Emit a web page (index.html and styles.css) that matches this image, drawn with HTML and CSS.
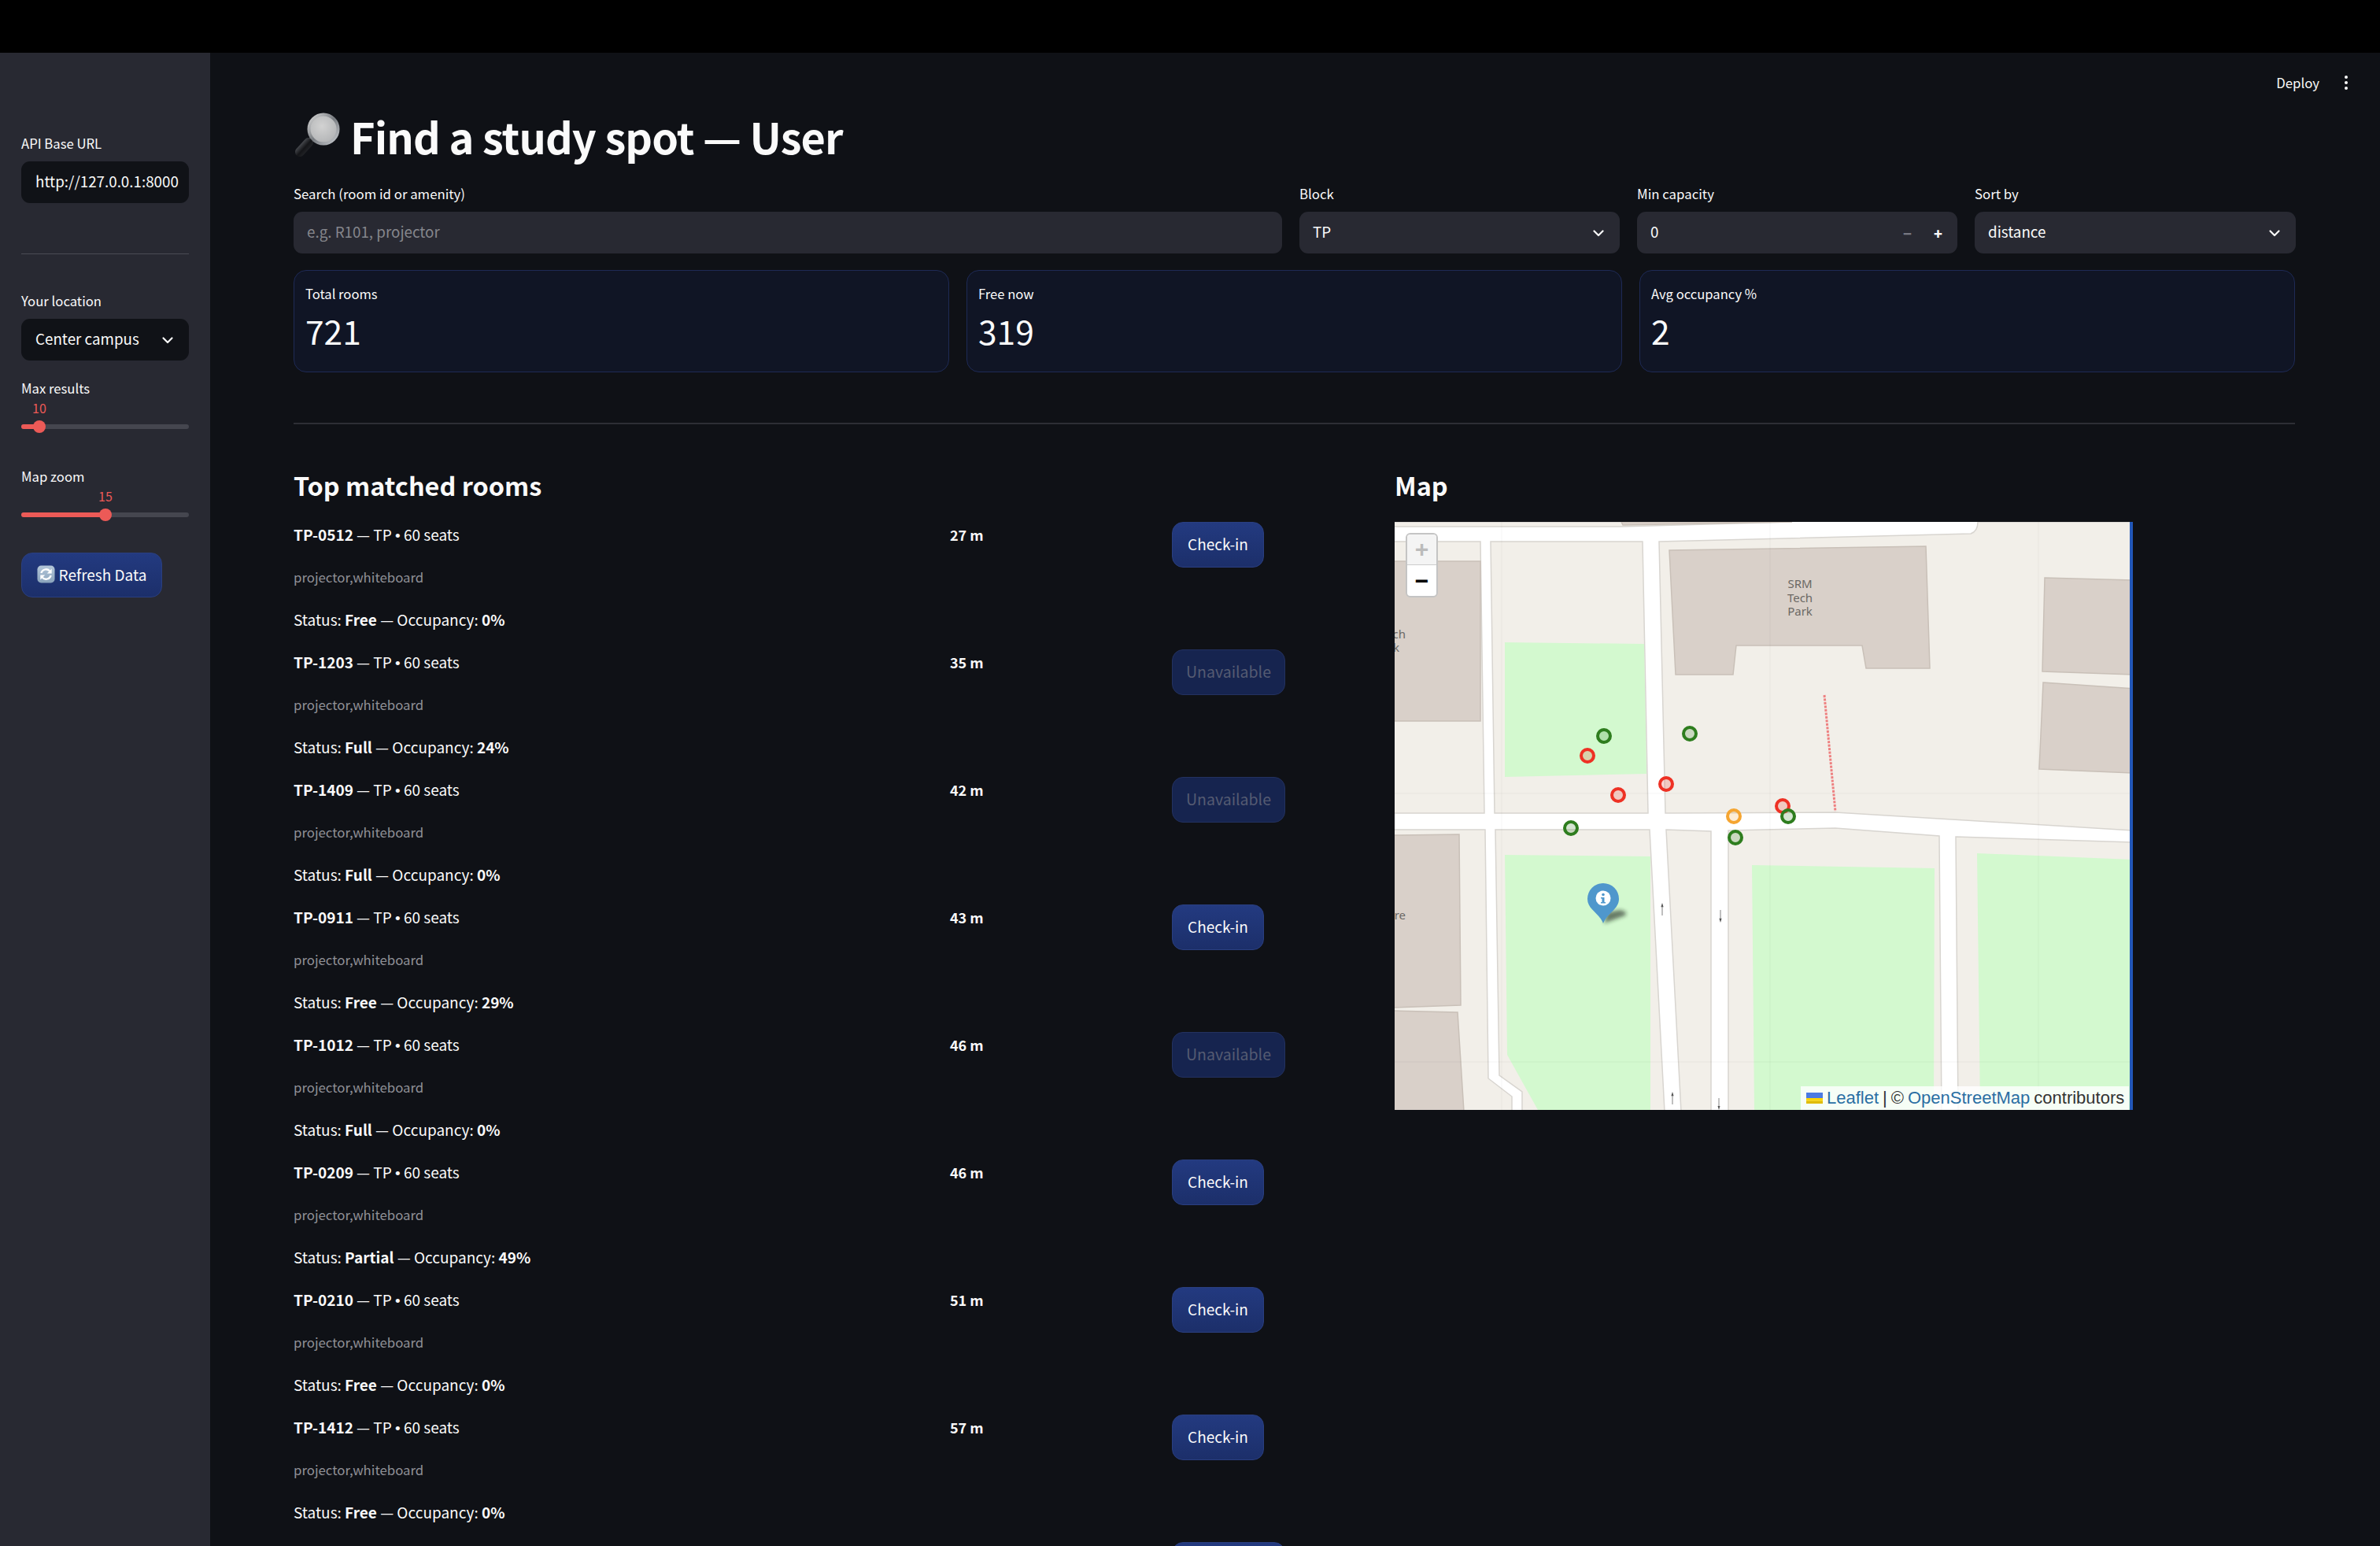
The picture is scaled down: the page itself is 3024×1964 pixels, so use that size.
FILE: index.html
```html
<!DOCTYPE html>
<html lang="en">
<head>
<meta charset="utf-8">
<title>Find a study spot — User</title>
<link rel="stylesheet" href="styles.css">
</head>
<body>
<svg class="defs" width="0" height="0" aria-hidden="true">
  <symbol id="chev" viewBox="0 0 16 10"><path d="M2.5 2.5l5.5 5.5 5.5-5.5" fill="none" stroke="currentColor" stroke-width="2.2" stroke-linecap="round" stroke-linejoin="round"/></symbol>
  <symbol id="arrow-up" viewBox="0 0 8 30"><path d="M4 30V8" stroke="#555" stroke-width="1.4"/><path d="M4 0l3 10H1z" fill="#555"/></symbol>
  <symbol id="arrow-down" viewBox="0 0 8 30"><path d="M4 0v22" stroke="#555" stroke-width="1.4"/><path d="M4 30l3-10H1z" fill="#555"/></symbol>
</svg>
<div class="topbar"></div>
<div class="app">
  <aside class="sidebar">
    <div class="side-field side-api">
      <label class="side-label">API Base URL</label>
      <div class="side-input">http://127.0.0.1:8000</div>
    </div>
    <hr class="side-rule">
    <div class="side-field">
      <label class="side-label">Your location</label>
      <div class="side-input side-select">Center campus <svg class="chev"><use href="#chev"/></svg></div>
    </div>
    <div class="slider slider-first">
      <label class="side-label">Max results</label>
      <div class="slider-value slider-value-10">10</div>
      <div class="track"><div class="fill" style="width:11%"><span class="thumb"></span></div></div>
    </div>
    <div class="slider slider-second">
      <label class="side-label">Map zoom</label>
      <div class="slider-value slider-value-15">15</div>
      <div class="track"><div class="fill" style="width:50%"><span class="thumb"></span></div></div>
    </div>
    <button class="btn refresh">
      <svg class="refresh-icon" viewBox="0 0 24 24">
        <defs><linearGradient id="rg" x1="0" y1="0" x2="0" y2="1"><stop offset="0" stop-color="#b4c7d9"/><stop offset="1" stop-color="#8aa3bc"/></linearGradient></defs>
        <rect x="0.5" y="0.5" width="23" height="23" rx="5" fill="url(#rg)"/>
        <path d="M5.6 10.5A6.6 6.6 0 0 1 16.8 7.6" fill="none" stroke="#fff" stroke-width="2.4"/><path d="M19.5 4.8v6.2h-6.2z" fill="#fff"/>
        <path d="M18.4 13.5A6.6 6.6 0 0 1 7.2 16.4" fill="none" stroke="#fff" stroke-width="2.4"/><path d="M4.5 19.2v-6.2h6.2z" fill="#fff"/>
      </svg>
      Refresh Data
    </button>
  </aside>

  <main class="main">
    <div class="toolbar"><span>Deploy</span><span class="dots"><i></i><i></i><i></i></span></div>

    <h1 class="title">
      <svg class="emoji" viewBox="0 0 60 60">
        <defs>
          <radialGradient id="lens" cx="0.45" cy="0.4" r="0.7"><stop offset="0" stop-color="#d2d2d2"/><stop offset="1" stop-color="#aeb0b2"/></radialGradient>
          <linearGradient id="rim" x1="0" y1="0" x2="1" y2="1"><stop offset="0" stop-color="#d9d9d9"/><stop offset=".5" stop-color="#777b80"/><stop offset="1" stop-color="#c9ccd0"/></linearGradient>
          <linearGradient id="grip" x1="0" y1="0" x2="1" y2="1"><stop offset="0" stop-color="#55585d"/><stop offset=".55" stop-color="#141518"/><stop offset="1" stop-color="#26282c"/></linearGradient>
        </defs>
        <path d="M24 33l-5 6" stroke="#8b8d90" stroke-width="7"/>
        <path d="M19 38L8 50" stroke="url(#grip)" stroke-width="12" stroke-linecap="round"/>
        <circle cx="38" cy="21" r="18.5" fill="url(#lens)" stroke="url(#rim)" stroke-width="4"/>
      </svg>
      Find a study spot — User
    </h1>

    <section class="filters">
      <div class="field">
        <label class="label">Search (room id or amenity)</label>
        <div class="input placeholder">e.g. R101, projector</div>
      </div>
      <div class="field">
        <label class="label">Block</label>
        <div class="input">TP <svg class="chev"><use href="#chev"/></svg></div>
      </div>
      <div class="field">
        <label class="label">Min capacity</label>
        <div class="input">0 <span class="stepper"><b class="minus">−</b><b>+</b></span></div>
      </div>
      <div class="field">
        <label class="label">Sort by</label>
        <div class="input">distance <svg class="chev"><use href="#chev"/></svg></div>
      </div>
    </section>

    <section class="metrics">
      <div class="metric"><div class="metric-label">Total rooms</div><div class="metric-value">721</div></div>
      <div class="metric"><div class="metric-label">Free now</div><div class="metric-value">319</div></div>
      <div class="metric"><div class="metric-label">Avg occupancy %</div><div class="metric-value">2</div></div>
    </section>

    <hr class="rule">

    <section class="columns">
      <div class="rooms">
        <h2 class="heading">Top matched rooms</h2>
        <div class="room">
          <div class="room-text"><p><b>TP-0512</b> — TP <span class="bull">•</span> 60 seats</p><p class="amen">projector,whiteboard</p><p>Status: <b>Free</b> — Occupancy: <b>0%</b></p></div>
          <div class="dist">27 m</div><button class="btn">Check-in</button>
        </div>
        <div class="room">
          <div class="room-text"><p><b>TP-1203</b> — TP <span class="bull">•</span> 60 seats</p><p class="amen">projector,whiteboard</p><p>Status: <b>Full</b> — Occupancy: <b>24%</b></p></div>
          <div class="dist">35 m</div><button class="btn off">Unavailable</button>
        </div>
        <div class="room">
          <div class="room-text"><p><b>TP-1409</b> — TP <span class="bull">•</span> 60 seats</p><p class="amen">projector,whiteboard</p><p>Status: <b>Full</b> — Occupancy: <b>0%</b></p></div>
          <div class="dist">42 m</div><button class="btn off">Unavailable</button>
        </div>
        <div class="room">
          <div class="room-text"><p><b>TP-0911</b> — TP <span class="bull">•</span> 60 seats</p><p class="amen">projector,whiteboard</p><p>Status: <b>Free</b> — Occupancy: <b>29%</b></p></div>
          <div class="dist">43 m</div><button class="btn">Check-in</button>
        </div>
        <div class="room">
          <div class="room-text"><p><b>TP-1012</b> — TP <span class="bull">•</span> 60 seats</p><p class="amen">projector,whiteboard</p><p>Status: <b>Full</b> — Occupancy: <b>0%</b></p></div>
          <div class="dist">46 m</div><button class="btn off">Unavailable</button>
        </div>
        <div class="room">
          <div class="room-text"><p><b>TP-0209</b> — TP <span class="bull">•</span> 60 seats</p><p class="amen">projector,whiteboard</p><p>Status: <b>Partial</b> — Occupancy: <b>49%</b></p></div>
          <div class="dist">46 m</div><button class="btn">Check-in</button>
        </div>
        <div class="room">
          <div class="room-text"><p><b>TP-0210</b> — TP <span class="bull">•</span> 60 seats</p><p class="amen">projector,whiteboard</p><p>Status: <b>Free</b> — Occupancy: <b>0%</b></p></div>
          <div class="dist">51 m</div><button class="btn">Check-in</button>
        </div>
        <div class="room">
          <div class="room-text"><p><b>TP-1412</b> — TP <span class="bull">•</span> 60 seats</p><p class="amen">projector,whiteboard</p><p>Status: <b>Free</b> — Occupancy: <b>0%</b></p></div>
          <div class="dist">57 m</div><button class="btn">Check-in</button>
        </div>
        <div class="room">
          <div class="room-text"></div><div class="dist"></div><button class="btn btn-cut"></button>
        </div>
      </div>

      <div class="map-col">
        <h2 class="heading map-heading">Map</h2>
        <div class="map">
          <svg class="tiles" viewBox="0 0 938 747" width="938" height="747">
            <defs><filter id="soft" x="-40%" y="-40%" width="180%" height="180%"><feGaussianBlur stdDeviation="2.5"/></filter></defs>
            <rect width="938" height="747" fill="#fff"/>
            <g fill="#f2efe9" stroke="#d8d5d0" stroke-width="1.5">
              <path d="M-2 0H505L288 6H-2z"/>
              <path d="M-2 25H109L114 370H-2z"/>
              <path d="M122 25H315L322 370H127z"/>
              <path d="M336 25L732 15Q741 12 741 0H940V392L675 376L560 369L344 370z"/>
              <path d="M-2 391H115L119 707L149 730V749H-2z"/>
              <path d="M128 391H324L343 749H162V724L133 703z"/>
              <path d="M345 391L402 393V749H364z"/>
              <path d="M424 392L560 389L692 399L695 749H424z"/>
              <path d="M713 400L940 407V749H716z"/>
            </g>
            <g fill="#d9d0c9" stroke="#c9c0b8" stroke-width="1.5">
              <path d="M-2 50H109V253H-2z"/>
              <path d="M288 0H505L290 4z"/>
              <path d="M349 36L675 31L680 186H599L594 157H434L430 194H357z"/>
              <path d="M826 71L940 74V194L823 190z"/>
              <path d="M824 204L940 212V319L819 314z"/>
              <path d="M-2 398L82 397L84 614L-2 617z"/>
              <path d="M-2 621L80 623L88 749H-2z"/>
            </g>
            <g fill="#d3f9cf">
              <path d="M140 153L317 155L320 320L140 324z"/>
              <path d="M140 423L325 425V747H182L143 677z"/>
              <path d="M454 436L686 440L685 747H457z"/>
              <path d="M740 421L940 429V747H744z"/>
            </g>
            <g stroke="#000" stroke-opacity=".04" stroke-width="1">
              <path d="M136 0V747M477 0V747M818 0V747M0 345H938M0 686H938"/>
            </g>
            <g class="map-label">
              <text x="515" y="84" text-anchor="middle">SRM</text>
              <text x="515" y="102" text-anchor="middle">Tech</text>
              <text x="515" y="119" text-anchor="middle">Park</text>
              <text x="14" y="148" text-anchor="end">Tech</text>
              <text x="6" y="165" text-anchor="end">Park</text>
              <text x="14" y="505" text-anchor="end">Centre</text>
            </g>
            <use href="#arrow-up" x="336" y="484" width="8" height="16"/>
            <use href="#arrow-down" x="410" y="493" width="8" height="16"/>
            <use href="#arrow-up" x="349" y="724" width="8" height="16"/>
            <use href="#arrow-down" x="408" y="732" width="8" height="15"/>
            <path d="M546 220L560 368" stroke="#ee8080" stroke-width="3" stroke-dasharray="3 1.5"/>
            <g stroke-width="4" fill-opacity=".2">
              <g class="m-green"><circle cx="266" cy="272" r="8"/><circle cx="375" cy="269" r="8"/><circle cx="224" cy="389" r="8"/></g>
              <g class="m-red"><circle cx="245" cy="297" r="8"/><circle cx="345" cy="333" r="8"/><circle cx="284" cy="347" r="8"/><circle cx="493" cy="361" r="8"/></g>
              <g class="m-orange"><circle cx="431" cy="374" r="8"/></g>
              <g class="m-green"><circle cx="500" cy="374" r="8"/><circle cx="433" cy="401" r="8"/></g>
            </g>
            <path d="M266 510L293 500Q297 495 286 493L270 496z" fill="#1e2a1e" fill-opacity=".6" filter="url(#soft)"/>
            <path d="M265 510C259 496 245 492 245 479A20 20 0 0 1 285 479C285 492 271 496 265 510z" fill="#4f97cc"/>
            <circle cx="265" cy="478" r="9.5" fill="#fff"/>
            <circle cx="265" cy="473.5" r="1.8" fill="#4f97cc"/>
            <path d="M262 477H266.5V483H268V484.5H262V483H263.5V478.5H262z" fill="#4f97cc"/>
          </svg>
          <div class="zoom-ctl"><span class="zoom-in">+</span><span class="zoom-out">−</span></div>
          <div class="attr">
            <svg class="flag" viewBox="0 0 21 14"><rect width="21" height="7" fill="#4c7be1"/><rect y="7" width="21" height="3.5" fill="#ffd500"/><rect y="10.5" width="21" height="3.5" fill="#e0bc00"/></svg>
            <span class="link">Leaflet</span> <span class="sep">|</span> © <span class="link">OpenStreetMap</span> contributors
          </div>
          <div class="map-edge"></div>
        </div>
      </div>
    </section>
  </main>
</div>
</body>
</html>
```
FILE: styles.css
```css
* { box-sizing: border-box; }
html, body { margin: 0; height: 1964px; overflow: hidden; background: #000; }
body { font-family: "Noto Sans CJK SC", "Noto Sans", sans-serif; color: #fafafa; }
.defs { position: absolute; }
.topbar { height: 67px; background: #000; }
.app { display: flex; height: 1897px; overflow: hidden; }

/* sidebar */
.sidebar { width: 267px; flex: none; background: #282932; padding: 104px 27px 0; display: flex; flex-direction: column; align-items: stretch; }
.side-label { display: block; font-size: 16.7px; line-height: 22px; color: #fafafa; }
.side-field .side-label { margin-bottom: 12px; }
.side-input { height: 53px; background: #101217; border-radius: 11px; padding: 0 19px 4px 18px; font-size: 18.8px; display: flex; align-items: center; justify-content: space-between; color: #fafafa; white-space: nowrap; }
.side-api .side-input { padding-right: 10px; }
.side-rule { width: 100%; border: 0; border-top: 1px solid #4a4b55; margin: 64px 0 48px; }
.side-select .chev { margin-top: 4px; }
.slider { position: relative; height: 60px; }
.slider-first { margin-top: 24px; }
.slider-second { margin-top: 52px; }
.slider-value { font-size: 16px; line-height: 20px; color: #ec5a57; position: absolute; top: 26px; }
.slider-value-10 { left: 14px; }
.slider-value-15 { left: 98px; }
.track { position: absolute; top: 57px; left: 0; right: 0; height: 6px; border-radius: 3px; background: #45464f; }
.fill { position: relative; height: 6px; background: #ec5a57; border-radius: 3px; }
.thumb { position: absolute; right: -8px; top: -5px; width: 16px; height: 16px; border-radius: 50%; background: #ec5a57; }
.refresh { align-self: flex-start; margin-top: 48px; width: 179px; height: 57px; display: flex; align-items: center; justify-content: center; gap: 5px; font-size: 19px; padding-bottom: 2px; }
.refresh-icon { width: 23px; height: 23px; flex: none; }

/* buttons */
.btn { font-family: inherit; color: #fafafa; font-size: 19px; border: 1px solid #2a3f80; border-radius: 14px; background: linear-gradient(#233a80, #1c2f6a); padding: 0 0 3px; }
.room .btn { width: 117px; height: 58px; margin-top: 11px; }
.room .btn.off { width: 144px; background: #16244f; border-color: #23315f; color: #555b72; font-size: 19.5px; }
.room .btn-cut { width: 144px; }

/* main */
.main { flex: 1; min-width: 0; position: relative; background: #0f1116; padding: 74px 108px 0 106px; }
.toolbar { position: absolute; top: 25px; right: 41px; display: flex; align-items: center; gap: 32px; font-size: 16.8px; line-height: 26px; }
.dots { display: flex; flex-direction: column; gap: 3px; }
.dots i { width: 4px; height: 4px; border-radius: 50%; background: #fafafa; }
.title { margin: 0 0 30px; height: 64px; display: flex; align-items: center; gap: 12px; font-size: 54px; letter-spacing: -.85px; line-height: 64px; font-weight: 700; white-space: nowrap; }
.emoji { width: 60px; height: 60px; flex: none; }

.filters { display: grid; grid-template-columns: 1256px 407px 407px 408px; column-gap: 22px; }
.label { display: block; font-size: 16.8px; line-height: 22px; margin-bottom: 12px; }
.input { height: 53px; background: #282932; border-radius: 11px; padding: 0 19px 4px 17px; font-size: 18.8px; display: flex; align-items: center; justify-content: space-between; }
.input .chev, .stepper { margin-top: 4px; }
.placeholder { color: #85868c; }
.chev { width: 16px; height: 10px; color: #fafafa; flex: none; }
.stepper { display: flex; gap: 28px; font-size: 18px; font-weight: 700; }
.stepper .minus { color: #777882; }

.metrics { display: grid; grid-template-columns: repeat(3, 1fr); column-gap: 22px; margin-top: 21px; }
.metric { height: 130px; background: #101525; border: 1px solid #1e2a55; border-radius: 16px; padding: 16px 14px; }
.metric-label { font-size: 16.6px; line-height: 26px; }
.metric-value { font-size: 42.5px; line-height: 58px; margin-top: 5px; }

.rule { border: 0; height: 2px; background: #2d2e35; margin: 64px 0 0; }

.columns { display: grid; grid-template-columns: 1399px 1fr; margin-top: 55px; }
.heading { margin: 0; font-size: 32.4px; line-height: 44px; font-weight: 700; white-space: nowrap; }
.rooms .heading { margin-bottom: 14px; }
.map-heading { margin-bottom: 25px; }
.room { display: grid; grid-template-columns: 834px 282px auto; height: 162px; align-items: start; }
.room p { margin: 0; height: 54px; font-size: 19px; line-height: 54px; white-space: nowrap; }
.room .amen { font-size: 16.8px; color: #8f9096; }
.bull { font-family: "Liberation Sans", sans-serif; line-height: 0; }
.dist { font-size: 18px; line-height: 54px; font-weight: 700; }

/* map */
.map { position: relative; width: 938px; height: 747px; overflow: hidden; }
.tiles { display: block; }
.map-label text { font-family: "Noto Sans", sans-serif; font-size: 15px; fill: #6b6864; }
.m-green { stroke: #2e7d1e; fill: #2e7d1e; }
.m-red { stroke: #ee3124; fill: #ee3124; }
.m-orange { stroke: #f5a531; fill: #f5a531; }
.zoom-ctl { position: absolute; left: 14px; top: 14px; width: 41px; height: 82px; border: 2px solid #c4c4c4; border-radius: 6px; display: flex; flex-direction: column; overflow: hidden; font-family: "Liberation Sans", sans-serif; }
.zoom-ctl span { height: 39px; display: flex; align-items: center; justify-content: center; font-size: 30px; font-weight: 700; line-height: 1; }
.zoom-in { background: #f4f4f4; color: #bbb; border-bottom: 1px solid #ccc; }
.zoom-out { background: #fff; color: #000; }
.attr { position: absolute; right: 5px; bottom: 0; height: 30px; width: 417px; background: rgba(255,255,255,.8); display: flex; align-items: center; gap: 5px; padding-left: 7px; font-family: "Liberation Sans", sans-serif; font-size: 22px; color: #333; white-space: nowrap; }
.flag { width: 21px; height: 14px; flex: none; }
.link { color: #2a6ea3; }
.map-edge { position: absolute; top: 0; right: 0; bottom: 0; width: 4px; background: #2257b8; }
```
